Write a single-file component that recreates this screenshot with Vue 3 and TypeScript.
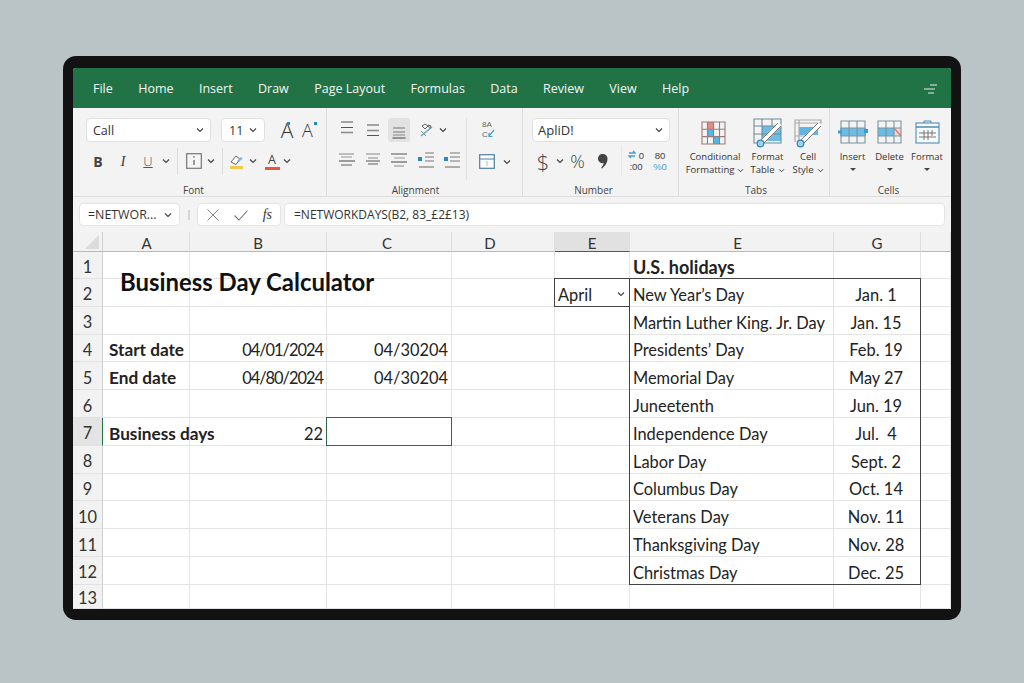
<script setup lang="ts">
type Cell = { text: string; cls?: string };

const tabs = ["File", "Home", "Insert", "Draw", "Page Layout", "Formulas", "Data", "Review", "View", "Help"];

const columns = [
  { key: "A", label: "A" },
  { key: "B", label: "B" },
  { key: "C", label: "C" },
  { key: "D", label: "D" },
  { key: "E", label: "E", active: true },
  { key: "F", label: "E" },
  { key: "G", label: "G" },
  { key: "X", label: "" },
];

const holidays: [string, string][] = [
  ["New Year’s Day", "Jan. 1"],
  ["Martin Luther King. Jr. Day", "Jan. 15"],
  ["Presidents’ Day", "Feb. 19"],
  ["Memorial Day", "May 27"],
  ["Juneetenth", "Jun. 19"],
  ["Independence Day", "Jul.  4"],
  ["Labor Day", "Sept. 2"],
  ["Columbus Day", "Oct. 14"],
  ["Veterans Day", "Nov. 11"],
  ["Thanksgiving Day", "Nov. 28"],
  ["Christmas Day", "Dec. 25"],
];

const cells: Record<string, Cell> = {
  A4: { text: "Start date", cls: "label" },
  B4: { text: "04/01/2024", cls: "num tight" },
  C4: { text: "04/30204", cls: "num" },
  A5: { text: "End date", cls: "label" },
  B5: { text: "04/80/2024", cls: "num tight" },
  C5: { text: "04/30204", cls: "num" },
  A7: { text: "Business days", cls: "label" },
  B7: { text: "22", cls: "num" },
  C7: { text: "", cls: "selected" },
  E2: { text: "April", cls: "dropdown" },
  F1: { text: "U.S. holidays", cls: "head" },
};
holidays.forEach(([name, date], i) => {
  cells[`F${i + 2}`] = { text: name };
  cells[`G${i + 2}`] = { text: date, cls: "date" };
});

const rows = Array.from({ length: 13 }, (_, i) => i + 1);

// title and holiday box share tracks with the cells, so cells get explicit tracks
const cellPlace = (row: number, col: number) => ({ gridRow: row + 1, gridColumn: col + 2 });
</script>

<template>
  <div class="page">
    <svg class="sprite" width="0" height="0">
      <symbol id="chev" viewBox="0 0 8 6">
        <path d="M1 1.5 4 4.5 7 1.5" fill="none" stroke="#444" stroke-width="1.2" />
      </symbol>
    </svg>

    <div class="frame">
      <div class="screen">
        <div class="menubar">
          <span v-for="t in tabs" :key="t" class="tab">{{ t }}</span>
          <svg class="collapse" width="14" height="10" viewBox="0 0 14 10">
            <path d="M7 1h7M1 5h11M5 9h6" stroke="#e6f0ea" stroke-width="1.2" fill="none" />
          </svg>
        </div>

        <div class="ribbon">
          <!-- Font -->
          <section class="group g-font">
            <div class="font-top">
              <div class="select font-name">Call<svg class="chev"><use href="#chev" /></svg></div>
              <div class="select font-size">11<svg class="chev"><use href="#chev" /></svg></div>
              <span class="grow big">A<i class="dot"></i></span>
              <span class="grow small">A<i class="dot"></i></span>
            </div>
            <div class="font-tools">
              <span class="b">B</span>
              <span class="i">I</span>
              <span class="u">U</span>
              <svg class="chev"><use href="#chev" /></svg>
              <i class="tsep"></i>
              <svg width="16" height="16" viewBox="0 0 16 16">
                <rect x=".7" y=".7" width="14.6" height="14.6" fill="#f5f5f5" stroke="#777" stroke-width="1.2" />
                <path d="M8 3v1.5M8 7v5" stroke="#666" stroke-width="1.3" />
              </svg>
              <svg class="chev"><use href="#chev" /></svg>
              <i class="tsep"></i>
              <svg width="15" height="16" viewBox="0 0 15 16">
                <path d="M2 9 7 3l4 3-4 5.500z" fill="#fff" stroke="#666" />
                <path d="M8 8l4-4 1.500 1.500-4 4z" fill="#6fb5dc" />
                <rect x="1" y="13" width="13" height="3" fill="#f2c94c" />
              </svg>
              <svg class="chev"><use href="#chev" /></svg>
              <span class="color-a">A</span>
              <svg class="chev"><use href="#chev" /></svg>
            </div>
            <div class="glabel">Font</div>
          </section>

          <!-- Alignment -->
          <section class="group g-align">
            <div class="align-body">
              <div class="align-main">
                <svg width="26" height="24" viewBox="0 0 26 24"><path d="M7 4h12M7 9.500h12" stroke="#555" fill="none" /><path d="M7 14.500h12" stroke="#888" stroke-width="1.5" /></svg>
                <svg width="26" height="24" viewBox="0 0 26 24"><path d="M7 7h12M7 17.500h12" stroke="#555" /><path d="M7 12.500h12" stroke="#888" stroke-width="1.5" /></svg>
                <svg class="on" width="22" height="24" viewBox="0 0 22 24"><path d="M5 10h12M5 14h12" stroke="#777" /><path d="M5 17h12" stroke="#888" /><path d="M4.500 20h13" stroke="#444" /></svg>
                <div class="orient">
                  <svg width="16" height="16" viewBox="0 0 16 16">
                    <path d="M3 4l3-2 3 2-3 3zM9 3l3 1-1 3z" fill="none" stroke="#666" />
                    <path d="M2 14 13 5" stroke="#5aa6d4" stroke-width="1.400" />
                    <path d="M2 9l5 5" stroke="#888" />
                  </svg>
                  <svg class="chev"><use href="#chev" /></svg>
                </div>
                <svg width="26" height="22" viewBox="0 0 26 22"><path d="M5 4h15" stroke="#888" /><path d="M7 7h11" stroke="#999" /><path d="M5 11h16" stroke="#444" /><path d="M7 15h11" stroke="#aaa" stroke-width="2" /></svg>
                <svg width="26" height="22" viewBox="0 0 26 22"><path d="M6 4h14M8 8h10" stroke="#888" /><path d="M6 11h14" stroke="#555" /><path d="M8 14h10" stroke="#aaa" stroke-width="2" /></svg>
                <svg width="26" height="22" viewBox="0 0 26 22"><path d="M5 4h16" stroke="#555" /><path d="M8 8h11" stroke="#999" /><path d="M5 12h16" stroke="#444" /><path d="M8 16h10" stroke="#888" /></svg>
                <svg width="27" height="22" viewBox="0 0 27 22"><path d="M13 3h9M13 7h9M13 11h9" stroke="#777" /><path d="M7 17h15" stroke="#666" /><rect x="6" y="7" width="4" height="4" fill="#2f86bd" /></svg>
                <svg width="27" height="22" viewBox="0 0 27 22"><path d="M11 3h10M11 7h10M11 11h10" stroke="#777" /><path d="M6 17h15" stroke="#666" /><rect x="5" y="7" width="4" height="4" fill="#2f86bd" /></svg>
              </div>
              <i class="vsep short"></i>
              <div class="align-side">
                <svg width="24" height="24" viewBox="0 0 24 24">
                  <text x="6" y="9" font-size="8" fill="#666" font-family="Liberation Sans, sans-serif">8A</text>
                  <text x="6" y="19" font-size="8" fill="#666" font-family="Liberation Sans, sans-serif">C</text>
                  <path d="M13 18l5-6M13 15v3.500h3.500" stroke="#4b9fd0" stroke-width="1.200" fill="none" />
                </svg>
                <div class="merge">
                  <svg width="16" height="15" viewBox="0 0 16 15">
                    <rect x=".7" y=".7" width="14.600" height="13.600" fill="#fbfbfb" stroke="#4f7f9e" stroke-width="1.200" />
                    <path d="M1 5h14" stroke="#4f7f9e" /><path d="M8 7v5" stroke="#bbb" />
                  </svg>
                  <svg class="chev"><use href="#chev" /></svg>
                </div>
              </div>
            </div>
            <div class="glabel">Alignment</div>
          </section>

          <!-- Number -->
          <section class="group g-number">
            <div class="select num-format">ApliD!<svg class="chev"><use href="#chev" /></svg></div>
            <div class="num-tools">
              <span class="sym">$</span>
              <svg class="chev"><use href="#chev" /></svg>
              <span class="sym pct">%</span>
              <svg width="12" height="18" viewBox="0 0 12 18"><path d="M6 2a4.500 4.500 0 0 1 4.500 4.800c0 4-2.500 7.500-5.500 9.700l-.8-.6c1.500-2 2.200-3.500 2.400-5.100A4.500 4.500 0 1 1 6 2z" fill="#444" /></svg>
              <i class="tsep pale"></i>
              <div class="dec"><span><svg width="8" height="9" viewBox="0 0 8 9"><path d="M1 3h6L5 1M7 6H1l2 2" fill="none" stroke="#4b9fd0" stroke-width="1.300" /></svg> 0</span><span>:00</span></div>
              <div class="dec"><span>80</span><span class="blue">%0</span></div>
            </div>
            <div class="glabel">Number</div>
          </section>

          <!-- Tabs -->
          <section class="group g-tabs">
            <div class="big-tools tabs-tools">
              <div class="big">
                <span class="big-icon cond">
                  <svg width="25" height="24" viewBox="0 0 25 24">
                    <rect x="6.500" y="1" width="6" height="7.300" fill="#e98b86" />
                    <rect x="6.500" y="8.300" width="6" height="7.300" fill="#58b4e0" />
                    <rect x="12.500" y="15.600" width="6" height="7.300" fill="#58b4e0" />
                    <path d="M1 1h23v22H1zM6.500 1v22M12.500 1v22M18.500 1v22M1 8.300h23M1 15.600h23" fill="none" stroke="#9a7b76" stroke-width="1.100" />
                  </svg>
                </span>
                <span class="big-text">Conditional<br />Formatting<svg class="chev"><use href="#chev" /></svg></span>
              </div>
              <div class="big">
                <span class="big-icon">
                  <svg width="30" height="30" viewBox="0 0 30 30">
                    <rect x="9" y="8" width="19" height="15" fill="#6cbce6" />
                    <path d="M1 1h27v24H1zM1 8h27M1 16h27M9 1v24M19 1v7" fill="none" stroke="#6f8b99" stroke-width="1.100" />
                    <path d="M8 25 27 6" stroke="#fff" stroke-width="5" />
                    <path d="M7 23 25 5M10 26 28 8" stroke="#777" stroke-width="1" />
                    <circle cx="7.500" cy="25.500" r="3.300" fill="#9bd3ef" stroke="#2f86bd" stroke-width="1.200" />
                  </svg>
                </span>
                <span class="big-text">Format<br />Table<svg class="chev"><use href="#chev" /></svg></span>
              </div>
              <div class="big">
                <span class="big-icon">
                  <svg width="30" height="30" viewBox="0 0 30 30">
                    <rect x="6" y="9" width="19" height="8" fill="#5fb6e4" />
                    <path d="M2 2h26v3H2zM2 2v22M6 2v22M2 18h16" fill="none" stroke="#aaa" stroke-width="1.200" />
                    <path d="M8 25 27 6" stroke="#fff" stroke-width="5" />
                    <path d="M7 23 25 5M10 26 28 8" stroke="#777" stroke-width="1" />
                    <circle cx="7.500" cy="25.500" r="3.300" fill="#9bd3ef" stroke="#2f86bd" stroke-width="1.200" />
                  </svg>
                </span>
                <span class="big-text">Cell<br />Style<svg class="chev"><use href="#chev" /></svg></span>
              </div>
            </div>
            <div class="glabel">Tabs</div>
          </section>

          <!-- Cells -->
          <section class="group g-cells">
            <div class="big-tools cells-tools">
              <div class="big">
                <span class="big-icon">
                  <svg width="30" height="24" viewBox="0 0 30 24">
                    <rect x="2" y="8" width="26" height="8" fill="#6cbce6" />
                    <path d="M3 1h24v22H3zM3 8h24M3 16h24M11 1v22M19 1v22" fill="none" stroke="#7b939f" stroke-width="1.100" />
                    <rect x="0" y="10.500" width="4" height="3" fill="#3d9bd0" />
                    <rect x="26" y="9" width="4" height="4" fill="#3d9bd0" />
                  </svg>
                </span>
                <span class="big-text">Insert</span>
                <i class="caret"></i>
              </div>
              <div class="big">
                <span class="big-icon">
                  <svg width="25" height="24" viewBox="0 0 25 24">
                    <rect x="1" y="8" width="16" height="8" fill="#6cbce6" />
                    <rect x="17" y="8" width="7" height="8" fill="#f8d4cf" />
                    <path d="M17 8l7 8" stroke="#e5786f" stroke-width="1.400" />
                    <path d="M1 1h23v22H1zM1 8h23M1 16h23M9 1v22M17 1v22" fill="none" stroke="#7b939f" stroke-width="1.100" />
                  </svg>
                </span>
                <span class="big-text">Delete</span>
                <i class="caret"></i>
              </div>
              <div class="big">
                <span class="big-icon">
                  <svg width="25" height="24" viewBox="0 0 25 24">
                    <path d="M9 3V1h7v2" fill="none" stroke="#4f8db5" />
                    <rect x="1" y="3" width="23" height="20" fill="#f7f9fa" stroke="#4f8db5" stroke-width="1.100" />
                    <path d="M1 7h23" stroke="#4f8db5" stroke-width="1.500" />
                    <path d="M4 13h17M4 17h17M9 10v10M13 10v10M17 10v6" stroke="#666" stroke-width=".9" />
                  </svg>
                </span>
                <span class="big-text">Format</span>
                <i class="caret"></i>
              </div>
            </div>
            <div class="glabel">Cells</div>
          </section>
        </div>

        <div class="formula-bar">
          <div class="namebox">=NETWOR...<svg class="chev"><use href="#chev" /></svg></div>
          <i class="grip"></i>
          <div class="fx-buttons">
            <svg width="14" height="14" viewBox="0 0 14 14"><path d="M1.500 1.500l11 11M12.500 1.500l-11 11" stroke="#888" fill="none" /></svg>
            <svg width="16" height="14" viewBox="0 0 16 14"><path d="M1.500 7.500 6 12 14.500 2.500" stroke="#777" fill="none" stroke-width="1.100" /></svg>
            <span class="fx">fs</span>
          </div>
          <div class="formula">=NETWORKDAYS(B2, 83_£2£13)</div>
        </div>

        <div class="sheet">
          <div class="corner"><i></i></div>
          <div
            v-for="c in columns"
            :key="c.key"
            class="colhead"
            :class="['col-' + c.key, { active: c.active }]"
          >{{ c.label }}</div>

          <template v-for="r in rows" :key="r">
            <div class="rowhead" :class="{ active: r === 7 }">{{ r }}</div>
            <div
              v-for="(c, i) in columns"
              :key="c.key"
              class="cell"
              :class="cells[c.key + r]?.cls"
              :style="cellPlace(r, i)"
            >
              <span v-if="cells[c.key + r]?.text">{{ cells[c.key + r].text }}</span>
              <svg v-if="cells[c.key + r]?.cls === 'dropdown'" class="chev"><use href="#chev" /></svg>
            </div>
          </template>

          <div class="title">Business Day Calculator</div>
          <div class="holiday-box"></div>
        </div>
      </div>
    </div>
  </div>
</template>

<style scoped>
.page {
  width: 1024px;
  height: 683px;
  box-sizing: border-box;
  padding: 56px 63px 63px;
  background: #bac3c6;
  overflow: hidden;
  font-family: "Open Sans", "Noto Sans", sans-serif;
  color: #333;
}
.sprite {
  position: absolute;
}
.frame {
  height: 564px;
  box-sizing: border-box;
  padding: 12px 10px 11px;
  background: #121212;
  border-radius: 13px;
}
.screen {
  height: 541px;
  display: flex;
  flex-direction: column;
  background: #f3f3f3;
  border-radius: 3px 3px 0 0;
  overflow: hidden;
}
.chev {
  width: 8px;
  height: 6px;
  flex: none;
}

/* menu */
.menubar {
  height: 40px;
  flex: none;
  box-sizing: border-box;
  display: flex;
  align-items: center;
  gap: 25.4px;
  padding: 1px 0 0 20px;
  background: #217346;
  color: #f2f7f4;
  font-size: 12.5px;
}
.collapse {
  margin-left: auto;
  margin-right: 14px;
}

/* ribbon */
.ribbon {
  height: 89px;
  flex: none;
  display: flex;
  box-sizing: border-box;
  border-bottom: 1px solid #dcdcdc;
  background: #f3f3f3;
}
.group {
  position: relative;
  box-sizing: border-box;
  height: 88px;
  padding-top: 10px;
  border-right: 1px solid #dddddd;
}
.g-font { width: 254px; padding-left: 13px; }
.g-align { width: 196px; padding-left: 7px; }
.g-number { width: 156px; padding-left: 9px; }
.g-tabs { width: 151px; padding-left: 8px; }
.g-cells { width: 121px; padding-left: 5px; border-right: none; }
.glabel {
  position: absolute;
  left: 0;
  right: 0;
  bottom: -1px;
  text-align: center;
  font-size: 10px;
  line-height: 14px;
  color: #444;
}
.g-font .glabel { right: 12px; }
.g-align .glabel { right: 18px; }
.g-number .glabel { right: 14px; }
.g-tabs .glabel { left: 4px; }
.g-cells .glabel { right: 4px; }
.select {
  display: flex;
  align-items: center;
  justify-content: space-between;
  box-sizing: border-box;
  height: 24px;
  padding: 0 6px;
  background: #fff;
  border: 1px solid #e0e0e0;
  border-radius: 4px;
  font-size: 12.5px;
  color: #333;
}
.font-top {
  display: flex;
  align-items: center;
}
.font-name { width: 125px; }
.font-size { width: 44px; margin-left: 10px; padding: 0 7px; }
.grow {
  position: relative;
  font-weight: 300;
  color: #333;
  line-height: 24px;
}
.grow.big { font-size: 21px; margin-left: 7px; width: 30px; }
.grow.small { font-size: 18px; width: 18px; }
.dot {
  position: absolute;
  top: 4px;
  left: 12px;
  width: 3px;
  height: 3px;
  background: #2f86bd;
}
.grow.big .dot { left: 15px; }

.font-tools {
  display: grid;
  grid-template-columns: 24px 26px 24px 12px 10px 24px 10px 12px 16px 18px 20px 10px;
  justify-items: center;
  align-items: center;
  height: 22px;
  margin-top: 6px;
  color: #444;
}
.b { font-weight: 700; font-size: 14px; }
.i { font-family: "Liberation Serif", serif; font-style: italic; font-size: 15px; }
.u { font-size: 13px; font-weight: 300; text-decoration: underline; color: #555; }
.tsep {
  width: 1px;
  height: 26px;
  background: #dcdcdc;
}
.tsep.pale { height: 30px; background: #e8e8e8; }
.color-a {
  box-sizing: border-box;
  width: 15px;
  text-align: center;
  font-size: 12.5px;
  line-height: 15px;
  border-bottom: 3px solid #e8553f;
}

.align-body { display: flex; height: 54px; }
.align-main {
  display: grid;
  grid-template-columns: 26px 26px 26px 27px 27px;
  grid-template-rows: 24px 22px;
  row-gap: 8px;
  justify-items: center;
  align-items: center;
}
.on { background: #e2e2e2; border-radius: 3px; }
.orient {
  grid-column: 4 / 6;
  justify-self: start;
  display: flex;
  align-items: center;
  gap: 4px;
  margin-left: 7px;
}
.vsep.short {
  width: 1px;
  height: 62px;
  background: #e0e0e0;
}
.align-side {
  display: flex;
  flex-direction: column;
  justify-content: space-between;
  padding-left: 9px;
}
.merge { display: flex; align-items: center; gap: 8px; padding: 0 0 3px 3px; }

.num-format { width: 138px; font-size: 13px; padding-left: 5px; }
.num-tools {
  display: grid;
  grid-template-columns: 22px 12px 23px 28px 8px 22px 26px;
  justify-items: center;
  align-items: center;
  height: 24px;
  margin-top: 4px;
}
.sym { font-size: 22px; font-weight: 300; color: #444; }
.pct { font-size: 18px; }
.dec {
  display: flex;
  flex-direction: column;
  align-items: center;
  font-family: "Liberation Sans", sans-serif;
  font-size: 9.5px;
  line-height: 11px;
  color: #444;
}
.blue { color: #4b9fd0; }

.big-tools { display: grid; }
.tabs-tools { grid-template-columns: 56px 49px 32px; }
.cells-tools { grid-template-columns: 35px 39px 36px; }
.big {
  display: flex;
  flex-direction: column;
  align-items: center;
  white-space: nowrap;
}
.big-icon {
  display: flex;
  align-items: center;
  justify-content: center;
  height: 30px;
}
.big-icon.cond { padding-right: 4px; }
.big-text {
  margin-top: 2px;
  text-align: center;
  font-size: 9.5px;
  line-height: 13px;
  color: #333;
}
.big-text .chev { width: 7px; height: 5px; margin-left: 3px; }
.cells-tools .big-icon { height: 26px; margin-top: 1px; }
.cells-tools .big-text { margin-top: 5px; }
.caret {
  margin-top: 5px;
  border-left: 3px solid transparent;
  border-right: 3px solid transparent;
  border-top: 3px solid #444;
}

/* formula bar */
.formula-bar {
  height: 35px;
  flex: none;
  box-sizing: border-box;
  display: flex;
  align-items: center;
  padding: 0 6px;
  background: #f3f3f3;
}
.namebox,
.fx-buttons,
.formula {
  display: flex;
  align-items: center;
  box-sizing: border-box;
  height: 23px;
  background: #fff;
  border: 1px solid #e4e4e4;
  border-radius: 4px;
  font-size: 12px;
  color: #333;
}
.namebox {
  width: 101px;
  padding: 0 7px 0 8px;
  justify-content: space-between;
  font-size: 12.4px;
}
.grip {
  width: 2px;
  height: 10px;
  margin: 0 7px 0 8px;
  background: #d5d5d5;
}
.fx-buttons {
  width: 84px;
  padding: 0 8px;
  justify-content: space-between;
}
.fx {
  font-family: "Liberation Serif", serif;
  font-style: italic;
  font-size: 14px;
}
.formula {
  width: 661px;
  margin-left: 3px;
  padding-left: 9px;
}

/* sheet */
.sheet {
  flex: 1;
  min-height: 0;
  display: grid;
  grid-template-columns: 30px 87px 137px 125px 103px 75px 204px 87px 30px;
  grid-template-rows: 20px 27px repeat(11, 27.8px) 1fr;
  background: #fff;
  font-family: "Lato", "Open Sans", sans-serif;
  font-size: 16.4px;
  color: #222;
}
.corner,
.colhead,
.rowhead {
  background: #f2f2f2;
  box-sizing: border-box;
}
.corner {
  display: flex;
  align-items: flex-end;
  justify-content: flex-end;
  padding: 0 3px 2px 0;
  border-right: 1px solid #cfcfcf;
  border-bottom: 1px solid #b8b8b8;
}
.corner i {
  border-left: 14px solid transparent;
  border-bottom: 14px solid #dbdbdb;
}
.colhead {
  display: flex;
  align-items: center;
  justify-content: center;
  padding-top: 2px;
  font-size: 15px;
  color: #333;
  border-right: 1px solid #dedede;
  border-bottom: 1px solid #b8b8b8;
}
.col-A { padding-left: 1px; }
.col-C { padding-right: 4px; }
.col-D { padding-right: 26px; }
.col-F { padding-left: 12px; }
.colhead.active {
  background: #e1e1e1;
  border-bottom: 1px solid #217346;
}
.rowhead {
  grid-column: 1;
  display: flex;
  align-items: center;
  justify-content: center;
  padding-top: 3px;
  color: #333;
  border-right: 1px solid #cfcfcf;
  border-bottom: 1px solid #e2e2e2;
}
.rowhead.active {
  background: #e4e4e4;
  border-right: 1px solid #217346;
}
.cell {
  display: flex;
  align-items: center;
  box-sizing: border-box;
  min-width: 0;
  padding: 4px 3px 0;
  white-space: pre;
  border-right: 1px solid #e4e4e4;
  border-bottom: 1px solid #e4e4e4;
}
.cell.label { padding-left: 6px; font-size: 17.2px; font-weight: 700; }
.cell.head { font-size: 18px; font-weight: 700; }
.cell.num { justify-content: flex-end; padding-right: 3px; }
.cell.tight { letter-spacing: -1px; }
.cell.date { justify-content: center; padding-right: 5px; }
.cell.selected {
  margin: -1px 0 0 -1px;
  border: 1px solid #2f6b4a;
}
.cell.dropdown {
  justify-content: space-between;
  margin: -1px 0 0 -1px;
  padding: 4px 4px 0 3px;
  border: 1px solid #444;
}
.title {
  grid-column: 2 / 5;
  grid-row: 2 / 4;
  align-self: center;
  padding: 4px 0 0 17px;
  font-size: 23.9px;
  font-weight: 700;
  color: #111;
  white-space: nowrap;
}
.holiday-box {
  grid-column: 7 / 9;
  grid-row: 3 / 14;
  margin: -1px 0 0 -1px;
  border: 1px solid #444;
  pointer-events: none;
}
</style>
